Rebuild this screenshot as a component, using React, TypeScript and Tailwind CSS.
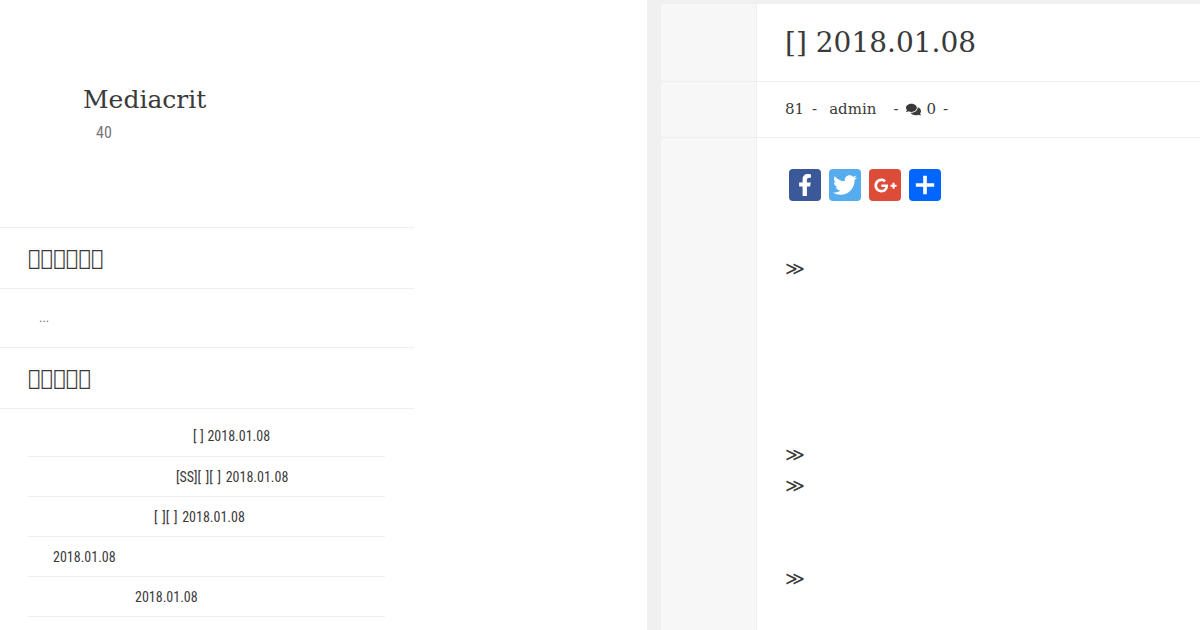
import React from "react";
import { FaComments, FaFacebookF, FaTwitter, FaGooglePlusG } from "react-icons/fa";

const T = "\uE000";
const list = [
  { text: "[ ] 2018.01.08", pl: "pl-[165px]" },
  { text: "[SS][ ][ ] 2018.01.08", pl: "pl-[148px]" },
  { text: "[ ][ ] 2018.01.08", pl: "pl-[126px]" },
  { text: "2018.01.08", pl: "pl-[25px]" },
  { text: "2018.01.08", pl: "pl-[107px]" },
  { text: "[ ] 2018.01.08", pl: "pl-[35px]" },
];

function Heading({ n }: { n: number }) {
  return (
    <div className="h-[61px] border-b border-[#eeeeee] pl-[28px] pt-[2px] flex items-center font-['DejaVu_Serif',serif] text-[21px] text-[#3a3a3a]">
      {T.repeat(n)}
    </div>
  );
}

function Share({ bg, children }: { bg: string; children: React.ReactNode }) {
  return <div className={`w-8 h-8 rounded-[4px] flex items-center justify-center text-white ${bg}`}>{children}</div>;
}

function Chevron({ className }: { className: string }) {
  return <div className={`font-['DejaVu_Serif',serif] text-[19px] leading-[20px] text-[#3a3a3a] ${className}`}>≫</div>;
}

export default function App() {
  return (
    <div className="w-[1200px] h-[630px] overflow-hidden flex bg-white">
      <div className="w-[647px] shrink-0">
        <aside className="w-[414px]">
          <div className="h-[228px] border-b border-[#eeeeee] pt-[84px] pl-[83px]">
            <div className="font-['DejaVu_Serif',serif] text-[25px] leading-[31px] text-[#3a3a3a]">Mediacrit</div>
            <div className="mt-[7px] pl-[13px] font-['Roboto',sans-serif] [font-stretch:75%] text-[16px] leading-[22px] text-[#777777]">40</div>
          </div>
          <Heading n={6} />
          <div className="h-[59px] border-b border-[#eeeeee] pl-[39px] pt-[18px] font-['Roboto',sans-serif] [font-stretch:75%] text-[13px] leading-[22px] text-[#777777]">...</div>
          <Heading n={5} />
          <ul className="ml-[28px] mr-[29px] font-['Roboto',sans-serif] [font-stretch:75%] text-[14px] text-[#3a3a3a]">
            {list.map((r, i) => (
              <li key={i} className={`${i === 0 ? "h-[48px] pt-[7px] [word-spacing:0.5px]" : "h-[40px] pt-[2px] [word-spacing:1.5px]"} ${i === 5 ? "opacity-20" : ""} border-b border-[#eeeeee] flex items-center whitespace-pre ${r.pl}`}>
                {r.text}
              </li>
            ))}
          </ul>
        </aside>
      </div>
      <div className="flex-1 bg-[#f0f0f0] pl-[14px] pt-[4px]">
        <div className="h-full flex bg-white">
          <div className="w-[96px] shrink-0 bg-[#f7f7f7] border-r border-[#eeeeee] flex flex-col">
            <div className="h-[78px] border-b border-[#eeeeee]" />
            <div className="h-[56px] border-b border-[#eeeeee]" />
          </div>
          <main className="flex-1 font-['DejaVu_Serif',serif] text-[#3a3a3a]">
            <div className="h-[78px] border-b border-[#eeeeee] pl-[28px] flex items-center text-[28px]">[] 2018.01.08</div>
            <div className="h-[56px] border-b border-[#eeeeee] pl-[28px] flex items-center text-[15px]">
              <span>81</span>
              <span className="ml-[8px]">-</span>
              <span className="ml-[12px]">admin</span>
              <span className="ml-[17px]">-</span>
              <FaComments className="ml-[8px] mr-[5px] w-[15px] h-[15px]" />
              <span>0</span>
              <span className="ml-[7px]">-</span>
            </div>
            <div className="pl-[32px] pt-[31px] flex gap-2">
              <Share bg="bg-[#3b5998]"><FaFacebookF className="w-[22px] h-[22px]" /></Share>
              <Share bg="bg-[#55acee]"><FaTwitter className="w-[24px] h-[24px]" /></Share>
              <Share bg="bg-[#dd4b39]"><FaGooglePlusG className="w-[23px] h-[23px]" /></Share>
              <Share bg="bg-[#0166ff]">
                <svg viewBox="0 0 24 24" className="w-[22px] h-[22px]" fill="white"><path d="M10 2h4v8h8v4h-8v8h-4v-8H2v-4h8z" /></svg>
              </Share>
            </div>
            <div className="pl-[28px]">
              <Chevron className="mt-[57px]" />
              <Chevron className="mt-[166px]" />
              <Chevron className="mt-[11px]" />
              <Chevron className="mt-[73px]" />
            </div>
          </main>
        </div>
      </div>
    </div>
  );
}
